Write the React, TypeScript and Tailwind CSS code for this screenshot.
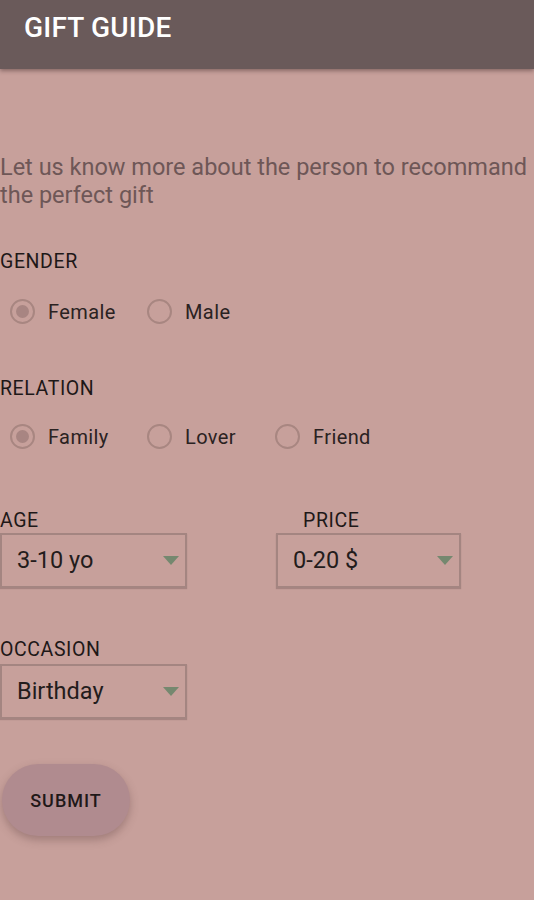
import React from "react";

function Radio({ label, checked }: { label: string; checked?: boolean }) {
  return (
    <div className="flex items-center">
      <div className="w-[25px] h-[25px] rounded-full border-2 border-[#a88681] flex items-center justify-center ml-[10px]">
        {checked && <div className="w-[13px] h-[13px] rounded-full bg-[#a88582]" />}
      </div>
      <span className="ml-[13px] text-[20px] tracking-[0.4px] text-[#2a2222] leading-none">{label}</span>
    </div>
  );
}

function Select({ value, w }: { value: string; w: string }) {
  return (
    <div className={`${w} h-[55px] border-2 border-[#a48581] flex items-center justify-between pl-[15px] pr-[6px] shadow-[0_1px_1px_rgba(120,90,90,0.4)]`}>
      <span className="text-[23.5px] text-[#231c1c] leading-none">{value}</span>
      <svg width="16" height="10" viewBox="0 0 16 10">
        <polygon points="0,0 16,0 8,9" fill="#75886f" />
      </svg>
    </div>
  );
}

function Label({ children, className = "" }: { children: React.ReactNode; className?: string }) {
  return <div className={`text-[19.5px] tracking-[0.6px] text-[#1e1818] leading-[18px] ${className}`}>{children}</div>;
}

export default function App() {
  return (
    <div className="w-[534px] h-[900px] bg-[#c7a09b] overflow-hidden" style={{ fontFamily: "Roboto, 'Noto Sans', sans-serif" }}>
      <div className="h-[69px] bg-[#6a5a5a] pl-[24px] pt-[12px] shadow-[0_2px_4px_rgba(60,40,40,0.45)]">
        <span className="text-white text-[28px] leading-[32px] font-medium tracking-[0.2px]">GIFT GUIDE</span>
      </div>
      <div className="pt-[84px]">
        <p className="text-[23.5px] leading-[28px] text-[#6e5757] whitespace-pre-line">{"Let us know more about the person to recommand\nthe perfect gift"}</p>
        <Label className="mt-[44px]">GENDER</Label>
        <div className="flex mt-[28px]">
          <div className="w-[137px]"><Radio label="Female" checked /></div>
          <Radio label="Male" />
        </div>
        <Label className="mt-[56px]">RELATION</Label>
        <div className="flex mt-[26px]">
          <div className="w-[137px]"><Radio label="Family" checked /></div>
          <div className="w-[128px]"><Radio label="Lover" /></div>
          <Radio label="Friend" />
        </div>
        <div className="flex mt-[63px]">
          <div className="w-[276px]">
            <Label>AGE</Label>
            <div className="mt-[3px]"><Select value="3-10 yo" w="w-[187px]" /></div>
          </div>
          <div>
            <Label className="pl-[27px]">PRICE</Label>
            <div className="mt-[3px]"><Select value="0-20 $" w="w-[185px]" /></div>
          </div>
        </div>
        <Label className="mt-[53px]">OCCASION</Label>
        <div className="mt-[5px]"><Select value="Birthday" w="w-[187px]" /></div>
        <button className="mt-[45px] ml-[2px] w-[128px] h-[72px] rounded-full bg-[#b08b8f] text-[18px] tracking-[1px] font-medium text-[#1f1818] shadow-[0_4px_8px_rgba(90,60,60,0.35)]">SUBMIT</button>
      </div>
    </div>
  );
}
